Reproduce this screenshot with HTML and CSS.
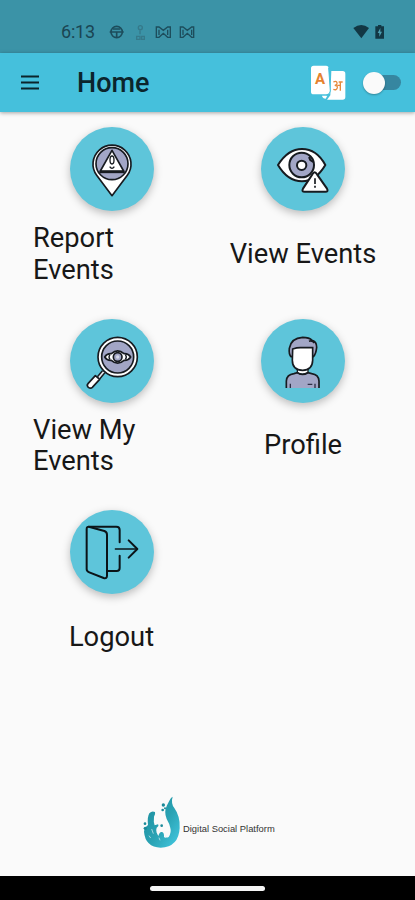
FILE: index.html
```html
<!DOCTYPE html>
<html lang="en">
<head>
	<meta charset="utf-8"/>
	<title>Home</title>
	<link rel="stylesheet" href="styles.css">
</head>

<body>

<div class="status">
	<span class="time">6:13</span>
	<svg class="status-left" width="88" height="18" viewBox="320 70 264 54">
		<g fill="none" stroke="#1d4d5c" stroke-width="5">
			<circle cx="349" cy="97" r="17"/>
			<path d="M328 97h42M338 88h22M349 98v17"/>
		</g>
		<g fill="none" stroke="#35798a" stroke-width="4">
			<circle cx="420" cy="84" r="6"/>
			<path d="M419 92v12M409 110h10v9h-10zM424 110h8v9h-8z"/>
		</g>
		<g fill="none" stroke="#1d4d5c" stroke-width="4">
			<path d="M468 82h8l13 10 13-10h8v31h-8l-13-12-13 12h-8zM476 90v16M502 90v16"/>
			<path d="M540 82h8l13 10 13-10h6v31h-6l-13-12-13 12h-8zM548 90v16M574 90v16"/>
		</g>
	</svg>
	<svg class="status-right" width="34" height="18" viewBox="450 70 102 54">
		<path fill="#123744" d="M451 85q24-18 47 0l-23 31z"/>
		<path fill="#123744" d="M525 76h10v4h8v37h-26V80h8z"/>
		<path fill="#4c9eb0" d="M532 85l-8 15h5v11l8-15h-5z"/>
	</svg>
</div>

<header class="appbar">
	<svg class="menu" width="20" height="16" viewBox="0 0 20 16">
		<path stroke="#0b252c" stroke-width="2" d="M1 1.5h18M1 7.5h18M1 13.5h18"/>
	</svg>
	<h1>Home</h1>
	<div class="language">
		<svg width="36" height="36" viewBox="314 194 108 108">
			<path fill="#fff" d="M378 212h34q8 0 8 8v70q0 8-8 8h-47l10-13z"/>
			<path fill="#fff" d="M325 196h37q8 0 8 8l5 68q0 10-9 10h-41q-8 0-8-8v-70q0-8 8-8z"/>
			<path fill="#fff" d="M350 286h16l-5 9q-9 0-11-9z"/>
			<path fill="none" stroke="#45c0dc" stroke-width="3" d="M370 202l5 70q-1 10-12 12"/>
			<path fill="none" stroke="#e58a3c" stroke-width="4" d="M384 245q12-5 11 5-1 5-7 5 9 0 8 7-2 9-12 5M396 255h9M405 245v26M400 245h12"/>
		</svg>
		<span>A</span>
	</div>
	<div class="switch"></div>
</header>

<main>
	<div class="grid">
		<div class="item">
			<div class="circle">
				<svg viewBox="30 20 252 252">
					<path fill="#fff" stroke="#171b20" stroke-width="5" stroke-linejoin="round" d="M156 226l-46-61a57 57 0 1 1 92 0z"/>
					<circle cx="156" cy="130" r="48" fill="#a2a6c6" stroke="#171b20" stroke-width="5"/>
					<path fill="#fff" stroke="#171b20" stroke-width="5" stroke-linejoin="round" d="M156 90l35 62h-70z"/>
					<path stroke="#171b20" stroke-width="7" d="M118 155h76"/>
					<ellipse cx="156" cy="119" rx="6" ry="12" fill="#fff" stroke="#171b20" stroke-width="4"/>
					<path fill="none" stroke="#171b20" stroke-width="4" d="M149 139q7 10 14 0"/>
				</svg>
			</div>
			<div class="label"><span>Report Events</span></div>
		</div>
		<div class="item">
			<div class="circle">
				<svg viewBox="30 20 252 252">
					<path fill="#fff" stroke="#171b20" stroke-width="6" stroke-linejoin="round" d="M81 134q30-48 72-48 44 0 70 48-29 49-70 49-43 0-72-49z"/>
					<circle cx="152" cy="134" r="37" fill="#a2a6c6" stroke="#171b20" stroke-width="6"/>
					<circle cx="152" cy="135" r="14" fill="#fff" stroke="#171b20" stroke-width="6"/>
					<path fill="none" stroke="#171b20" stroke-width="6" d="M174 110l4 9 9 6"/>
					<path fill="#fff" stroke="#171b20" stroke-width="6" stroke-linejoin="round" d="M184 162q7-13 14 0l30 43q5 9-5 9h-62q-10 0-5-9z"/>
					<path stroke="#171b20" stroke-width="5" d="M192 174v17M192 196v6"/>
				</svg>
			</div>
			<div class="label"><span>View Events</span></div>
		</div>
		<div class="item">
			<div class="circle">
				<svg viewBox="30 24 252 252">
					<path stroke="#171b20" stroke-width="14" d="M131 182l-15 18"/>
					<path stroke="#e8edf2" stroke-width="5" d="M131 182l-15 18"/>
					<path fill="#fff" stroke="#171b20" stroke-width="5" stroke-linejoin="round" d="M106 194l13 11-22 24q-5 5-12 0-6-6-1-11z"/>
					<circle cx="173" cy="138" r="59" fill="#fff" stroke="#171b20" stroke-width="5"/>
					<circle cx="173" cy="138" r="48" fill="#a2a6c6" stroke="#171b20" stroke-width="5"/>
					<path fill="#fff" stroke="#171b20" stroke-width="5" stroke-linejoin="round" d="M134 138q7-11 20-10 19-17 38 0 13-1 20 10-7 11-20 10-19 17-38 0-13 1-20-10z"/>
					<circle cx="173" cy="138" r="13" fill="#a2a6c6" stroke="#171b20" stroke-width="5"/>
					<circle cx="173" cy="138" r="5" fill="#d5d8e6"/>
					<path fill="none" stroke="#171b20" stroke-width="4" d="M150 131q-6 7 0 14M196 131q6 7 0 14"/>
				</svg>
			</div>
			<div class="label"><span>View My Events</span></div>
		</div>
		<div class="item">
			<div class="circle">
				<svg viewBox="30 24 252 252">
					<path fill="#fff" d="M139 166h32v22h-32z"/>
					<path fill="#a2a6c6" stroke="#171b20" stroke-width="5" d="M106 231v-21q1-19 23-22l10-3q14 11 32 0l11 3q21 3 22 22v21"/>
					<path fill="none" stroke="#171b20" stroke-width="4" d="M139 172v13q14 9 32 0v-13"/>
					<path fill="#a2a6c6" stroke="#171b20" stroke-width="5" stroke-linejoin="round" d="M120 137q-7-8-5-25 5-31 40-33 20 0 28 9 14 3 14 21-2 20-10 28z"/>
					<path fill="#fff" stroke="#171b20" stroke-width="5" d="M125 114q13-4 23-4h37v38q-1 30-30 30-31 0-31-30z"/>
					<path fill="none" stroke="#171b20" stroke-width="5" d="M174 91q10-4 16 5"/>
					<path stroke="#2e3147" stroke-width="4" d="M170 220h14M118 218v13M192 218v13"/>
				</svg>
			</div>
			<div class="label"><span>Profile</span></div>
		</div>
		<div class="item">
			<div class="circle">
				<svg viewBox="30 24 252 252">
					<g fill="none" stroke="#0b1418" stroke-width="6" stroke-linecap="round" stroke-linejoin="round">
						<path d="M80 81q0-9 9-6l44 12q8 3 8 11v123q0 10-10 7l-43-17q-8-3-8-9z"/>
						<path d="M87 74h82q10 0 10 10v37M179 161v37q0 9-9 9h-27"/>
						<path d="M206 115l26 26-26 26"/>
						<path stroke-width="4" d="M166 141h64"/>
					</g>
				</svg>
			</div>
			<div class="label"><span>Logout</span></div>
		</div>
	</div>

	<footer class="brand">
		<svg width="38" height="54" viewBox="40 30 114 162">
			<defs>
				<linearGradient id="wave" x1="0" y1="0" x2="1" y2="1">
					<stop offset="0" stop-color="#1b8a99"/>
					<stop offset=".55" stop-color="#2aa3b4"/>
					<stop offset="1" stop-color="#45cbe4"/>
				</linearGradient>
			</defs>
			<path fill="url(#wave)" d="M129 35q-6 20 5 34 18 25 16 60-3 57-57 59-46-2-50-48 1-12 12-20-3-23 4-35 8-9 17-4 2 8-3 14-2 16 2 26l10-3q4 5-4 10-3 8 0 15l5 10q4-14 11-12 7 2 6 15 8 3 14 0 9-14 5-27-2-12-11-27-9-21 1-41 6-13 12-22z"/>
			<g fill="#1b8a99">
				<circle cx="101" cy="60" r="5"/>
				<circle cx="99" cy="75" r="4"/>
				<circle cx="106" cy="70" r="3"/>
				<circle cx="46" cy="116" r="4"/>
				<circle cx="47" cy="130" r="5"/>
				<circle cx="96" cy="122" r="4"/>
			</g>
			<path fill="none" stroke="#dff3f6" stroke-width="2" d="M66 132l5 14M88 158l3 8M109 151l-3 8M58 152l5 7"/>
		</svg>
		<span>Digital Social Platform</span>
	</footer>
</main>

<div class="navbar">
	<div class="handle"></div>
</div>

</body>
</html>
```

FILE: styles.css
```css
body{
	margin: 0;
	height: 900px;
	display: flex;
	flex-direction: column;
	background: #fafafa;
	color: #171717;
	font-family: Roboto, sans-serif;
	overflow: hidden;
}
.status{
	box-sizing: border-box;
	height: 53px;
	padding: 23px 28px 0 61px;
	display: flex;
	background: #3b93a7;
}
.time{
	width: 46px;
	font-size: 18px;
	line-height: 18px;
	letter-spacing: -0.2px;
	color: #1a4553;
}
.status-right{
	margin-left: auto;
}
.appbar{
	height: 59px;
	flex: none;
	padding: 0 14px 0 20px;
	display: flex;
	align-items: center;
	background: #45c0dc;
	box-shadow: 0 1px 4px rgba(0,0,0,0.35);
	z-index: 1;
}
.appbar h1{
	margin: 0 auto 0 37px;
	font-size: 27px;
	font-weight: 500;
	line-height: 30px;
	color: #0b252c;
}
.language{
	position: relative;
	height: 36px;
	margin-right: 20px;
}
.language span{
	position: absolute;
	left: 5px;
	top: 5px;
	font-size: 15px;
	line-height: 18px;
	font-weight: 700;
	color: #e5822f;
}
.switch{
	width: 35px;
	height: 15px;
	border-radius: 8px;
	background: #3686a0;
	display: flex;
	align-items: center;
}
.switch::before{
	content: "";
	width: 22px;
	height: 22px;
	flex: none;
	margin-left: -3px;
	border-radius: 50%;
	background: #fafafa;
	box-shadow: 0 1px 2px rgba(0,0,0,0.3);
}
main{
	flex: 1;
	display: flex;
	flex-direction: column;
	justify-content: space-between;
}
.grid{
	padding: 15px 15px 0 16px;
	display: grid;
	grid-template-columns: 191px 192px;
	grid-auto-rows: 191.6px;
}
.item{
	display: flex;
	flex-direction: column;
	align-items: center;
}
.circle{
	width: 84px;
	height: 84px;
	border-radius: 50%;
	background: #5ec5da;
	box-shadow: 0 3px 9px rgba(0,0,0,0.25);
}
.circle svg{
	display: block;
}
.label{
	width: 157px;
	height: 87px;
	display: flex;
	align-items: center;
	justify-content: center;
	font-size: 27.3px;
	line-height: 31.5px;
}
.brand{
	padding: 0 0 27px 143px;
	display: flex;
	align-items: center;
	font-size: 9.4px;
	font-family: "Liberation Sans", sans-serif;
	color: #333;
}
.brand span{
	margin: 12px 0 0 2px;
}
.navbar{
	height: 24px;
	background: #000;
	display: flex;
	align-items: center;
	justify-content: center;
}
.handle{
	width: 115px;
	height: 5px;
	border-radius: 3px;
	background: #f5f5f5;
}
```
